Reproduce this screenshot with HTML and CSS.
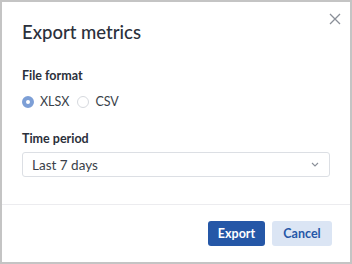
FILE: index.html
```html
<!DOCTYPE html>
<html lang="en">

<head>
    <meta charset="UTF-8">
    <meta name="viewport" content="width=device-width, initial-scale=1.0">
    <title>Export metrics</title>
    <link rel="stylesheet" href="styles.css">
</head>

<body>
    <div class="dialog">
        <div class="dialog-body">
            <div class="dialog-head">
                <h1>Export metrics</h1>
                <button class="close" aria-label="Close">
                    <svg width="12" height="12" viewBox="0 0 12 12">
                        <path d="M1 1L11 11M11 1L1 11" stroke="#8a8f98" stroke-width="1.3" fill="none" />
                    </svg>
                </button>
            </div>

            <div class="field">
                <div class="label">File format</div>
                <div class="radios">
                    <label class="radio checked"><span class="dot"></span>XLSX</label>
                    <label class="radio"><span class="dot"></span>CSV</label>
                </div>
            </div>

            <div class="field">
                <div class="label tight">Time period</div>
                <div class="select">
                    <span>Last 7 days</span>
                    <svg width="8" height="5" viewBox="0 0 8 5">
                        <path d="M1 1L4 4L7 1" stroke="#8a8f98" stroke-width="1.1" fill="none" />
                    </svg>
                </div>
            </div>
        </div>

        <div class="dialog-foot">
            <button class="btn primary">Export</button>
            <button class="btn secondary">Cancel</button>
        </div>
    </div>
</body>

</html>
```

FILE: styles.css
```css
body {
    font-family: 'Lato', 'Inter', sans-serif;
    background-color: #c4c4c4;
    color: #2b303b;
    margin: 0;
    padding: 2px;
    width: 352px;
    height: 264px;
    box-sizing: border-box;
}

.dialog {
    background-color: #ffffff;
    height: 100%;
    display: flex;
    flex-direction: column;
}

.dialog-body {
    padding: 0 20px 0 20px;
    flex: 1;
}

.dialog-head {
    display: flex;
    justify-content: space-between;
    align-items: flex-start;
    height: 66px;
}

h1 {
    margin: 19px 0 0 0;
    font-size: 18.5px;
    font-weight: 500;
    color: #2b303b;
}

.close {
    border: none;
    background: none;
    padding: 0;
    margin: 11px -11px 0 0;
    cursor: pointer;
}

.field {
    margin-bottom: 22px;
}

.label {
    font-size: 12.5px;
    line-height: 15px;
    font-weight: 700;
    margin-bottom: 11px;
}

.label.tight {
    margin-bottom: 6px;
}

.radios {
    display: flex;
    gap: 8px;
}

.radio {
    display: flex;
    align-items: center;
    gap: 6px;
    font-size: 12.5px;
    color: #3a3f4a;
}

.dot {
    width: 10px;
    height: 10px;
    border: 1px solid #d6d9de;
    border-radius: 50%;
    box-sizing: content-box;
}

.radio.checked .dot {
    width: 4px;
    height: 4px;
    border: 4px solid #7d9fd6;
    background-color: #ffffff;
}

.select {
    display: flex;
    justify-content: space-between;
    align-items: center;
    height: 23px;
    padding: 0 10px 0 9px;
    border: 1px solid #dcdfe4;
    border-radius: 3px;
    font-size: 13.5px;
    color: #3a3f4a;
}

.dialog-foot {
    border-top: 1px solid #ececef;
    display: flex;
    justify-content: flex-end;
    gap: 7px;
    padding: 16px 18px 16px 0;
}

.btn {
    font-family: inherit;
    font-size: 12.5px;
    font-weight: 700;
    height: 25px;
    border: none;
    border-radius: 3px;
    cursor: pointer;
}

.primary {
    width: 57px;
    background-color: #2557a7;
    color: #ffffff;
}

.secondary {
    width: 60px;
    background-color: #dbe5f4;
    color: #2557a7;
}
```
